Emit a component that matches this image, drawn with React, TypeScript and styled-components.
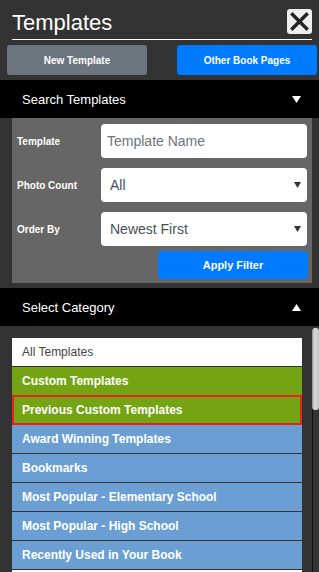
import React from 'react';
import styled, {createGlobalStyle} from 'styled-components';

const GlobalStyle = createGlobalStyle`
  html, body {
    margin: 0;
    padding: 0;
    background: #333333;
    overflow: hidden;
  }
  body {
    font-family: 'Liberation Sans', Arial, sans-serif;
  }
  * {
    box-sizing: border-box;
  }
`;

const Panel = styled.div`
  width: 319px;
  height: 572px;
  display: flex;
  flex-direction: column;
  background: #333333;
`;

const TitleRow = styled.div`
  margin: 9px 7px 0 12px;
  height: 31px;
  display: flex;
  align-items: flex-start;
  justify-content: space-between;
  border-bottom: 1px solid #ffffff;
`;

const Title = styled.h1`
  margin: 0;
  font-size: 22px;
  font-weight: normal;
  line-height: 27px;
  color: #ffffff;
`;

const CloseButton = styled.button`
  width: 25px;
  height: 25px;
  padding: 0;
  border: none;
  border-radius: 3px;
  background: #eeeeee;
  display: flex;
  align-items: center;
  justify-content: center;
`;

const ButtonRow = styled.div`
  margin: 5px 2px 0 7px;
  display: flex;
  justify-content: space-between;
`;

const ActionButton = styled.button<{variant: 'gray' | 'blue'}>`
  width: 140px;
  height: 30px;
  border: none;
  border-radius: 3px;
  background: ${({variant}) => (variant === 'blue' ? '#007bff' : '#6c757d')};
  color: #ffffff;
  font-family: 'Liberation Sans', Arial, sans-serif;
  font-size: 10px;
  font-weight: bold;
`;

const SectionHeader = styled.div<{top: number}>`
  margin-top: ${({top}) => top}px;
  height: 38px;
  flex-shrink: 0;
  padding: 0 18px 0 22px;
  display: flex;
  align-items: center;
  justify-content: space-between;
  background: #000000;
  color: #ffffff;
  font-size: 13px;
`;

const FilterBox = styled.div`
  margin: 0 7px 0 12px;
  padding: 6px 4px 4px 5px;
  background: #666666;
  display: flex;
  flex-direction: column;
  gap: 10px;
`;

const FieldRow = styled.div`
  display: grid;
  grid-template-columns: 84px 206px;
  align-items: center;
`;

const Label = styled.label`
  color: #ffffff;
  font-size: 10px;
  font-weight: bold;
`;

const TextInput = styled.input`
  height: 34px;
  width: 206px;
  border: none;
  border-radius: 4px;
  padding: 0 6px;
  font-family: 'Liberation Sans', Arial, sans-serif;
  font-size: 14px;
  color: #495057;
  background: #ffffff;
  &::placeholder {
    color: #6c757d;
  }
`;

const SelectWrap = styled.div`
  position: relative;
  width: 206px;
  height: 34px;
`;

const Select = styled.select`
  appearance: none;
  width: 100%;
  height: 34px;
  border: none;
  border-radius: 4px;
  padding: 0 9px;
  font-family: 'Liberation Sans', Arial, sans-serif;
  font-size: 14px;
  color: #495057;
  background: #ffffff;
`;

const SelectArrow = styled.svg`
  position: absolute;
  right: 6px;
  top: 14px;
  pointer-events: none;
`;

const ApplyRow = styled.div`
  margin-top: -5px;
  display: flex;
  justify-content: flex-end;
`;

const ApplyButton = styled.button`
  width: 150px;
  height: 28px;
  border: none;
  border-radius: 4px;
  background: #007bff;
  color: #ffffff;
  font-family: 'Liberation Sans', Arial, sans-serif;
  font-size: 11px;
  font-weight: bold;
`;

const ListArea = styled.div`
  flex: 1;
  min-height: 0;
  display: flex;
`;

const ListViewport = styled.div`
  flex: 1;
  overflow: hidden;
  padding: 12px 10px 0 12px;
`;

const ScrollTrack = styled.div`
  width: 7px;
  margin-top: 2px;
  border-left: 1px solid #111111;
  position: relative;
`;

const ScrollThumb = styled.div`
  position: absolute;
  top: 0;
  left: -1px;
  width: 7px;
  height: 82px;
  border-radius: 3px;
  background: linear-gradient(to right, #8f8f8f, #d8d8d8 35%, #c6c6c6);
`;

const CategoryList = styled.ul`
  margin: 0;
  padding: 0;
  list-style: none;
  width: 290px;
`;

type Tone = 'white' | 'green' | 'blue';

const toneBg: Record<Tone, string> = {
  white: '#ffffff',
  green: '#74a414',
  blue: '#6b9fd4',
};

const CategoryItem = styled.li<{tone: Tone; selected?: boolean}>`
  height: ${({selected}) => (selected ? 30 : 29)}px;
  margin-top: ${({selected}) => (selected ? -1 : 0)}px;
  padding-left: ${({selected}) => (selected ? 8 : 10)}px;
  display: flex;
  align-items: center;
  background: ${({tone}) => toneBg[tone]};
  border-bottom: 1px solid #333333;
  ${({selected}) => selected && 'border: 2px solid #e8201f;'}
  color: ${({tone}) => (tone === 'white' ? '#444444' : '#ffffff')};
  font-size: 12px;
  font-weight: ${({tone}) => (tone === 'white' ? 'normal' : 'bold')};
`;

const ListTail = styled.li`
  height: 29px;
  background: #ffffff;
`;

const Triangle: React.FC<{up?: boolean}> = ({up}) => (
  <svg width="9" height="7" viewBox="0 0 9 7">
    <polygon points={up ? '0,7 9,7 4.5,0' : '0,0 9,0 4.5,7'} fill="#ffffff" />
  </svg>
);

const categories: {name: string; tone: Tone; selected?: boolean}[] = [
  {name: 'All Templates', tone: 'white'},
  {name: 'Custom Templates', tone: 'green'},
  {name: 'Previous Custom Templates', tone: 'green', selected: true},
  {name: 'Award Winning Templates', tone: 'blue'},
  {name: 'Bookmarks', tone: 'blue'},
  {name: 'Most Popular - Elementary School', tone: 'blue'},
  {name: 'Most Popular - High School', tone: 'blue'},
  {name: 'Recently Used in Your Book', tone: 'blue'},
];

export default function App() {
  return (
    <Panel>
      <GlobalStyle />
      <TitleRow>
        <Title>Templates</Title>
        <CloseButton aria-label="Close">
          <svg width="19" height="19" viewBox="0 0 19 19">
            <path d="M2.5 2.5 L16.5 16.5 M16.5 2.5 L2.5 16.5" stroke="#222222" strokeWidth="3.4" strokeLinecap="square" />
          </svg>
        </CloseButton>
      </TitleRow>
      <ButtonRow>
        <ActionButton variant="gray">New Template</ActionButton>
        <ActionButton variant="blue">Other Book Pages</ActionButton>
      </ButtonRow>

      <SectionHeader top={5}>
        <span>Search Templates</span>
        <Triangle />
      </SectionHeader>
      <FilterBox>
        <FieldRow>
          <Label>Template</Label>
          <TextInput placeholder="Template Name" />
        </FieldRow>
        <FieldRow>
          <Label>Photo Count</Label>
          <SelectWrap>
            <Select defaultValue="all">
              <option value="all">All</option>
            </Select>
            <SelectArrow width="7" height="6" viewBox="0 0 7 6">
              <polygon points="0,0 7,0 3.5,6" fill="#333333" />
            </SelectArrow>
          </SelectWrap>
        </FieldRow>
        <FieldRow>
          <Label>Order By</Label>
          <SelectWrap>
            <Select defaultValue="newest">
              <option value="newest">Newest First</option>
            </Select>
            <SelectArrow width="7" height="6" viewBox="0 0 7 6">
              <polygon points="0,0 7,0 3.5,6" fill="#333333" />
            </SelectArrow>
          </SelectWrap>
        </FieldRow>
        <ApplyRow>
          <ApplyButton>Apply Filter</ApplyButton>
        </ApplyRow>
      </FilterBox>

      <SectionHeader top={5}>
        <span>Select Category</span>
        <Triangle up />
      </SectionHeader>
      <ListArea>
        <ListViewport>
          <CategoryList>
            {categories.map((c) => (
              <CategoryItem key={c.name} tone={c.tone} selected={c.selected}>
                {c.name}
              </CategoryItem>
            ))}
            <ListTail />
          </CategoryList>
        </ListViewport>
        <ScrollTrack>
          <ScrollThumb />
        </ScrollTrack>
      </ListArea>
    </Panel>
  );
}
